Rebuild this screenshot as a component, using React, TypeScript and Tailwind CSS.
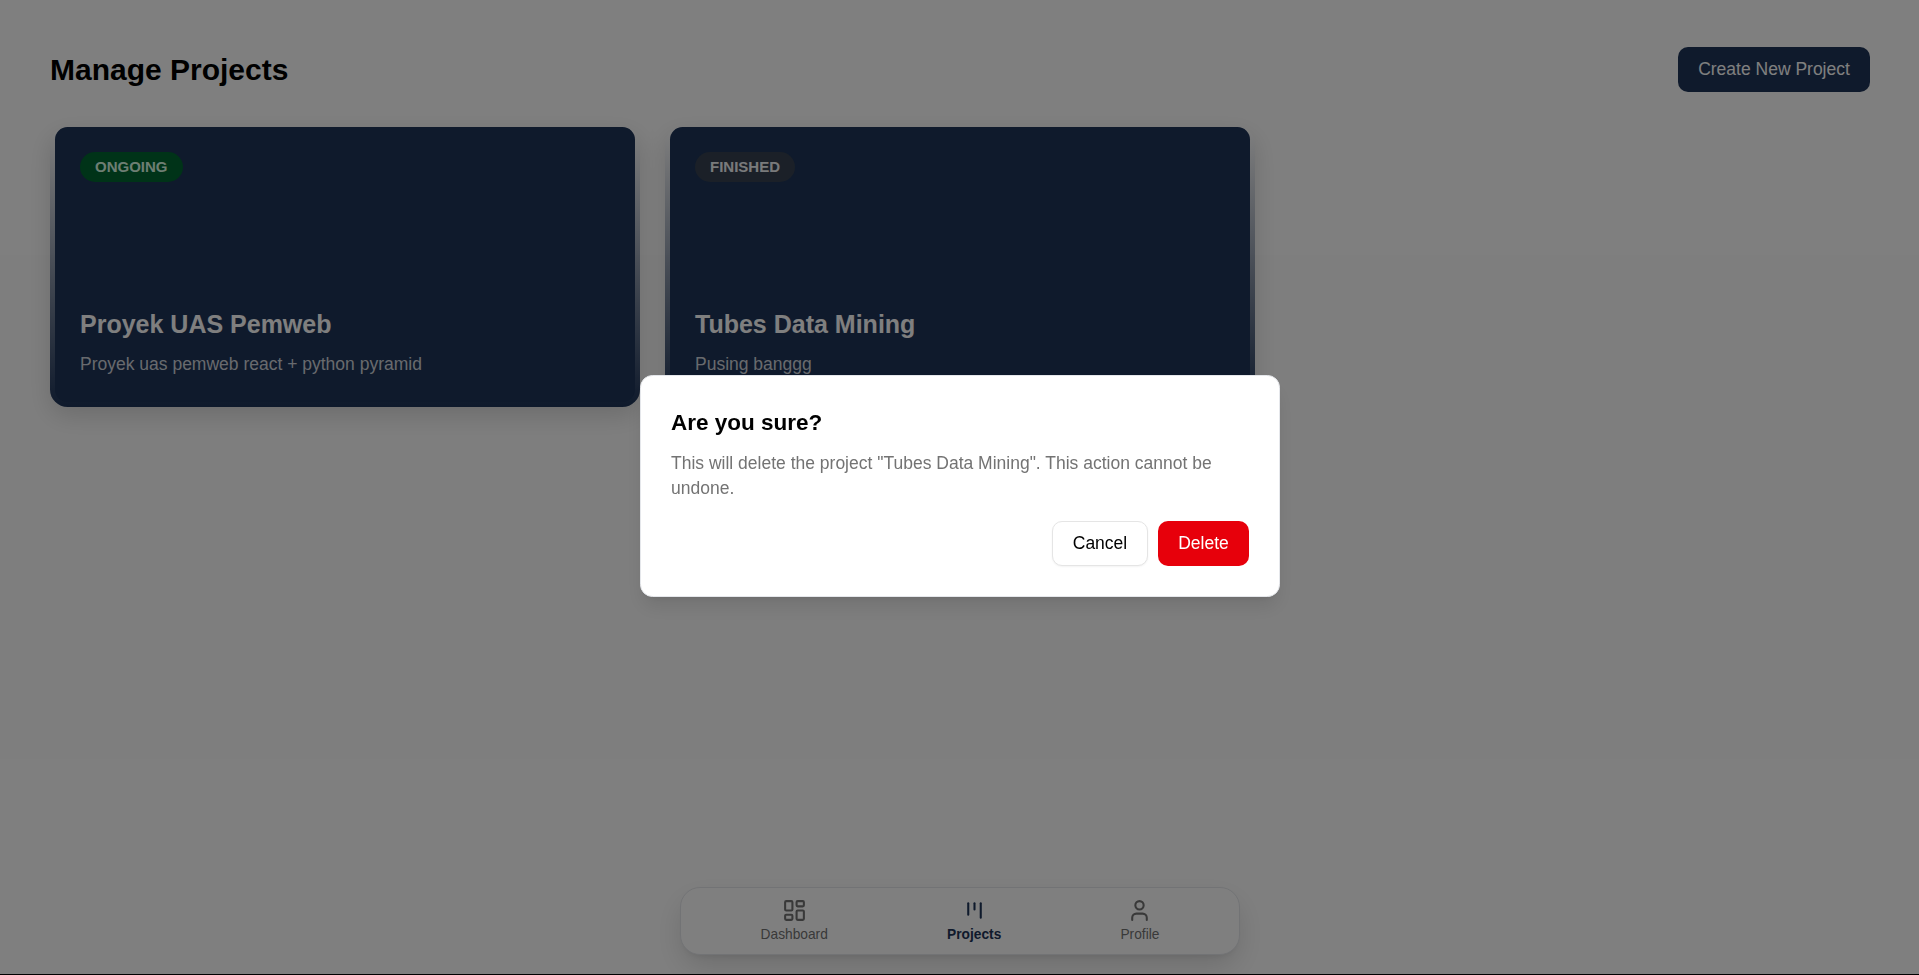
import { LayoutDashboard, User } from "lucide-react";

interface Project {
  title: string;
  description: string;
  status: string;
  badge: string;
}

const projects: Project[] = [
  {
    title: "Proyek UAS Pemweb",
    description: "Proyek uas pemweb react + python pyramid",
    status: "ONGOING",
    badge: "bg-[#016630] text-[#dcfce7]",
  },
  {
    title: "Tubes Data Mining",
    description: "Pusing banggg",
    status: "FINISHED",
    badge: "bg-[#364150] text-[#f3f4f6]",
  },
];

function BoardIcon() {
  return (
    <svg
      width="25"
      height="25"
      viewBox="0 0 24 24"
      fill="none"
      stroke="currentColor"
      strokeWidth="2"
      strokeLinecap="round"
      strokeLinejoin="round"
    >
      <path d="M6 5v11" />
      <path d="M12 5v6" />
      <path d="M18 5v14" />
    </svg>
  );
}

function ProjectCard({ project }: { project: Project }) {
  return (
    <article className="h-[280px] rounded-[17.5px] bg-linear-to-b from-transparent to-[#1e3458] px-[5px] pb-[5px] shadow-[0_8.75px_25px_rgb(0_0_0/0.14)]">
      <div className="flex h-full flex-col items-start justify-between rounded-[12.5px] bg-[#1e3458] p-[25px]">
        <span className={`flex h-[30px] items-center rounded-full px-[15px] text-[15px] font-semibold ${project.badge}`}>
          {project.status}
        </span>
        <div>
          <h2 className="text-[25px] leading-[35px] font-bold text-white">{project.title}</h2>
          <p className="mt-[10px] text-[17.5px] leading-[25px] text-gray-300">{project.description}</p>
        </div>
      </div>
    </article>
  );
}

export default function App() {
  return (
    <div className="h-[975px] overflow-hidden bg-black font-['Liberation_Sans',Arial,sans-serif]">
      <div className="flex h-[974px] flex-col bg-[linear-gradient(#fff_255px,#fdfdfd_255px,#fdfdfd_759px,#fff_759px)] pt-[47px] pr-[49px] pl-[50px] text-black">
        <header className="flex h-[45px] items-center justify-between">
          <h1 className="text-[30px] leading-[40px] font-bold">Manage Projects</h1>
          <button className="h-[45px] w-[192px] rounded-[10px] bg-[#1e3458] text-[17.5px] text-white">
            Create New Project
          </button>
        </header>
        <main className="mt-[35px] grid grid-cols-3 gap-[25px]">
          {projects.map((project) => (
            <ProjectCard key={project.title} project={project} />
          ))}
        </main>
        <nav className="mt-auto mb-[19px] flex h-[68px] w-[560px] items-start justify-around self-center rounded-[20px] border border-gray-200 bg-white px-[20px] pt-[10px] text-[13.75px] leading-[18.75px] text-[#737373] shadow-[0_12.5px_31.25px_-3.75px_rgb(0_0_0/0.16),0_5px_7.5px_-5px_rgb(0_0_0/0.1)]">
          <a className="flex flex-col items-center gap-[3px]">
            <LayoutDashboard size={25} />
            Dashboard
          </a>
          <a className="flex flex-col items-center gap-[3px] font-bold text-[#1e3458]">
            <BoardIcon />
            Projects
          </a>
          <a className="flex flex-col items-center gap-[3px]">
            <User size={25} />
            Profile
          </a>
        </nav>
      </div>
      <div className="fixed inset-x-0 top-0 flex h-[974px] items-center justify-center bg-black/50 pb-[2px]">
        <section
          role="alertdialog"
          className="flex h-[222px] w-[640px] flex-col rounded-[12.5px] border border-gray-200 bg-white py-[30px] pr-[30px] pl-[30.5px] shadow-[0_12.5px_18.75px_-3.75px_rgb(0_0_0/0.1),0_5px_7.5px_-5px_rgb(0_0_0/0.1)]"
        >
          <h2 className="text-[22.5px] leading-[34px] font-bold">Are you sure?</h2>
          <p className="mt-[11px] text-[17.5px] leading-[25px] text-[#737373]">
            This will delete the project "Tubes Data Mining". This action cannot be undone.
          </p>
          <div className="mt-auto flex justify-end gap-[10px] text-[17.5px]">
            <button className="h-[45px] w-[96px] rounded-[10px] border border-[#e5e5e5] bg-white pl-px shadow-xs">Cancel</button>
            <button className="h-[45px] w-[91px] rounded-[10px] bg-[#e7000b] pl-px text-white">Delete</button>
          </div>
        </section>
      </div>
    </div>
  );
}
